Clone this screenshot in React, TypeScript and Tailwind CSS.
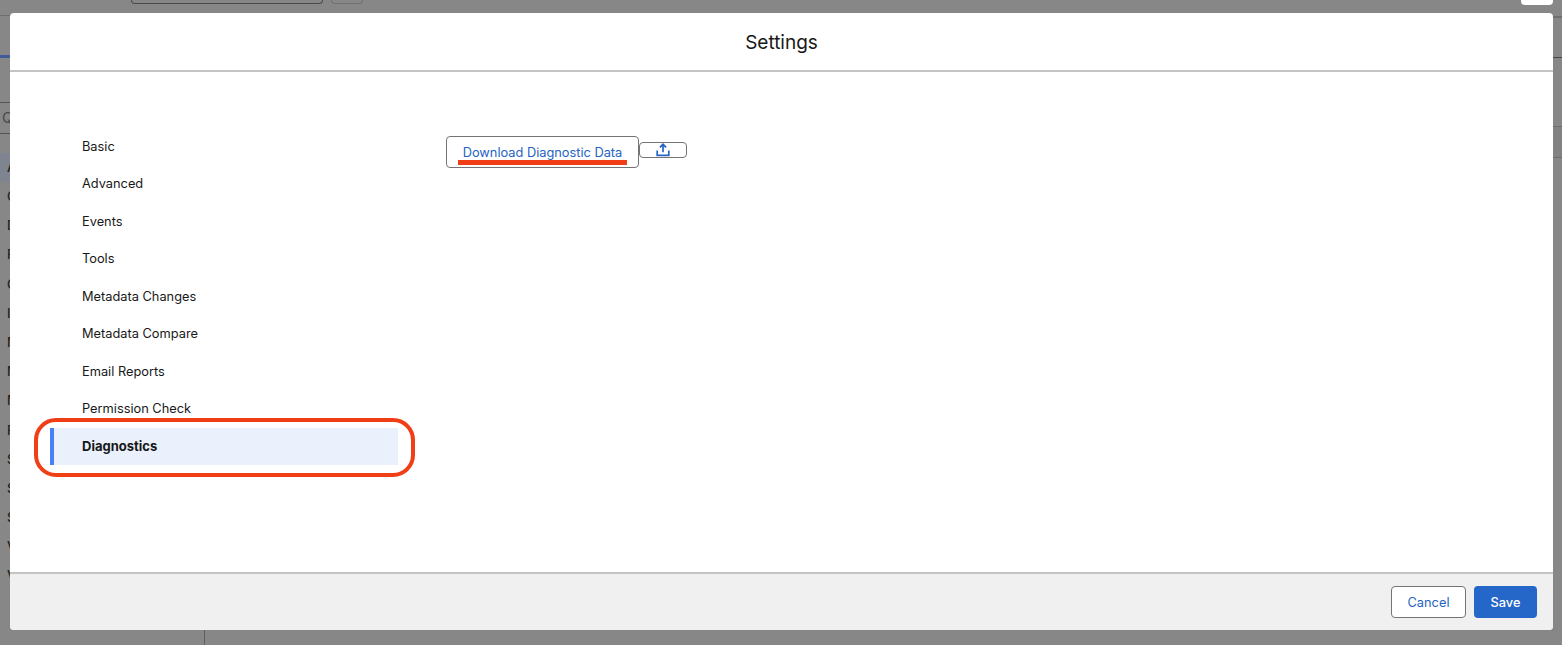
const NAV_ITEMS = [
  'Basic',
  'Advanced',
  'Events',
  'Tools',
  'Metadata Changes',
  'Metadata Compare',
  'Email Reports',
  'Permission Check',
  'Diagnostics',
]

const BACKDROP_LETTERS = ['A', 'C', 'D', 'F', 'G', 'I', 'M', 'M', 'M', 'F', 'S', 'S', 'S', 'V', 'V']

function UploadIcon() {
  return (
    <svg width="14" height="14" viewBox="0 0 14 14" fill="none" stroke="#2563c4" strokeWidth="1.7">
      <path d="M7 9.2V1.6" />
      <path d="M3.9 4.4 7 1.3l3.1 3.1" />
      <path d="M1.2 7.4v4.9h11.6V7.4" />
    </svg>
  )
}

function Backdrop() {
  return (
    <div className="flex h-full flex-col">
      <div className="flex h-[13px] pl-[131px]">
        <div className="h-[4px] w-[192px] rounded-b-[4px] border-x border-b border-[#4a4a4a]" />
        <div className="ml-2 h-[4px] w-[32px] rounded-b-[4px] border-x border-b border-[#707070]" />
        <div className="ml-auto mr-[9px] h-[5px] w-[32px] rounded-b-[4px] bg-white" />
      </div>
      <div className="flex h-[617px] justify-between">
        <div className="w-[10px] overflow-hidden">
          <div className="mt-[2px] h-px bg-[#6f6f6f]" />
          <div className="mt-[39px] h-[3px] bg-[#3f5c98]" />
          <div className="mt-[44px] flex h-[32px] items-center border-y border-[#555555] pl-[2px] text-[15px] text-[#4a4a4a]">
            Q
          </div>
          <div className="mt-[19px] flex flex-col pl-[7px] text-[13px] font-medium text-[#222222]">
            {BACKDROP_LETTERS.map((letter, i) => (
              <div
                key={i}
                className={`flex h-[29.2px] items-center ${i === 0 ? '-ml-[7px] bg-[#7f8491] pl-[7px]' : ''}`}
              >
                {letter}
              </div>
            ))}
          </div>
        </div>
        <div className="w-[9px]">
          <div className="mt-[3px] h-[2px] bg-[#6f6f6f]" />
          <div className="mt-[39px] h-px bg-[#444444]" />
          <div className="mt-[68px] h-[32px] border-y border-[#6d6d6d] bg-[#828282]" />
        </div>
      </div>
      <div className="ml-[204px] h-[15px] w-px bg-[#5f5f5f]" />
    </div>
  )
}

export default function App() {
  return (
    <div
      className="relative h-[645px] w-full overflow-hidden bg-[#878787] text-[12.8px] text-[#181818] antialiased opacity-[0.999]"
      style={{ fontFamily: 'Inter, "Liberation Sans", sans-serif' }}
    >
      <Backdrop />

      <div className="absolute left-[10px] top-[13px] flex h-[617px] w-[1543px] flex-col overflow-hidden rounded-[4px] bg-white">
        <header className="flex h-[59px] items-center justify-center border-b-2 border-[#c4c4c4] pt-px text-[19px] leading-none">
          Settings
        </header>

        <div className="flex h-[500px] pl-[40px] pt-[55.5px]">
          <nav className="flex w-[348px] flex-col">
            {NAV_ITEMS.map((item) =>
              item === 'Diagnostics' ? (
                <div
                  key={item}
                  className="flex h-[37.5px] items-center border-l-4 border-[#4a80f5] bg-[#eaf1fd] pl-[28px] text-[13px] font-bold"
                >
                  {item}
                </div>
              ) : (
                <div key={item} className="flex h-[37.5px] items-center pl-[32px]">
                  {item}
                </div>
              ),
            )}
          </nav>

          <div className="ml-[48px] flex items-start self-start pt-[8.5px]">
            <button className="relative h-[32px] w-[193px] rounded-[4px] border border-[#747474] bg-white pt-[2px] text-[#2563c4]">
              Download Diagnostic Data
              <span className="absolute bottom-[2px] left-[11px] h-[5px] w-[169px] bg-[#f03e17]" />
            </button>
            <button className="mt-[6px] flex h-[16px] w-[48px] items-center justify-center rounded-[4px] border border-[#747474] bg-white">
              <UploadIcon />
            </button>
          </div>
        </div>

        <footer className="flex h-[58px] items-center justify-end gap-2 border-t-2 border-[#c4c4c4] bg-[#f0f0f0] pr-[16px]">
          <button className="h-[32px] w-[75px] rounded-[4px] border border-[#747474] bg-white pt-px text-[#2563c4]">
            Cancel
          </button>
          <button className="h-[32px] w-[63px] rounded-[4px] bg-[#2566c9] pt-px font-medium text-white">
            Save
          </button>
        </footer>
      </div>

      {/* annotation ring drawn over the screenshot */}
      <div className="absolute left-[34px] top-[418px] h-[59px] w-[381px] rounded-[22px] border-4 border-[#f03e17]" />
    </div>
  )
}
